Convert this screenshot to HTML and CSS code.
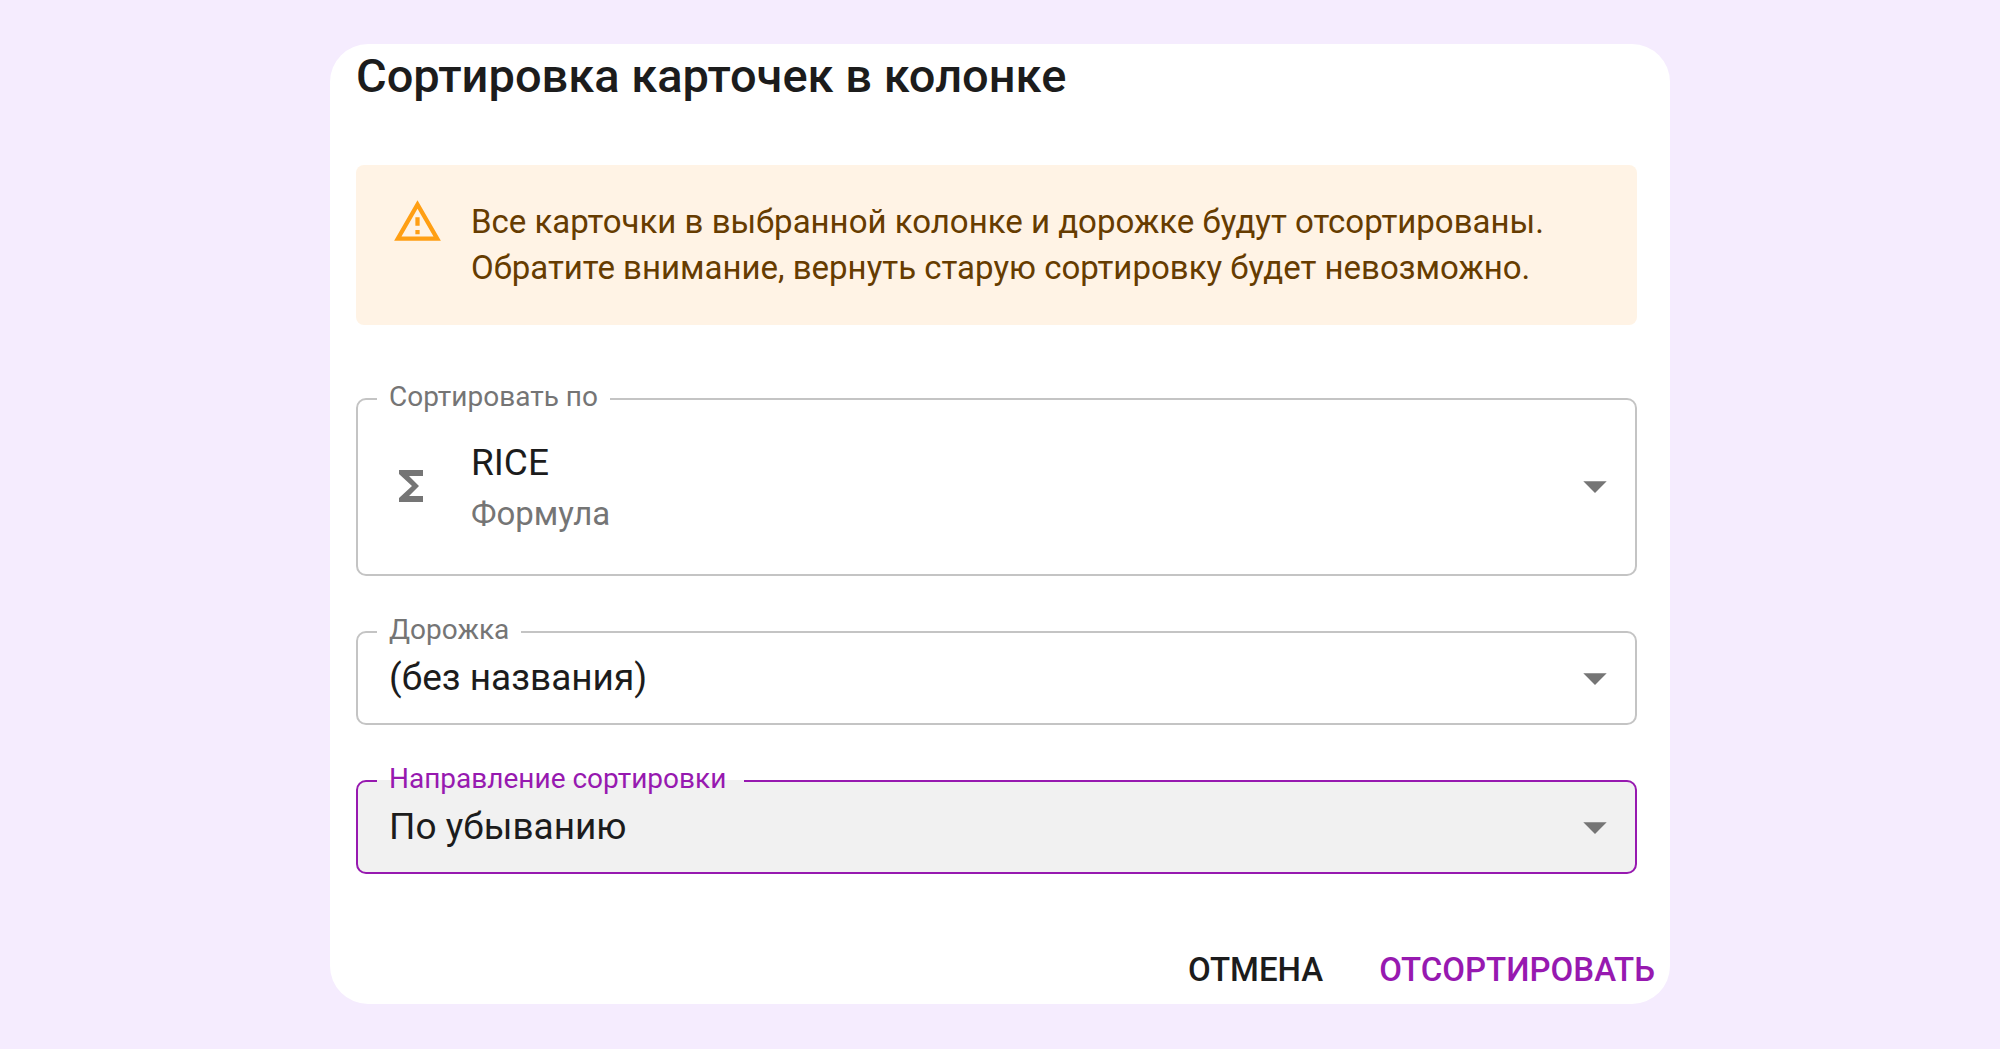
FILE: index.html
```html
<!DOCTYPE html>
<html lang="ru">
<head>
  <meta charset="UTF-8" />
  <meta name="viewport" content="width=device-width, initial-scale=1.0"/>
  <title>Сортировка карточек в колонке</title>
  <link rel="stylesheet" href="styles.css">
</head>
<body>

  <form class="dialog" onsubmit="return false">
    <div class="dialog-content">
      <h1>Сортировка карточек в колонке</h1>

      <div class="alert" role="alert">
        <svg class="alert-icon" viewBox="0 0 24 24"><path d="M12 5.99L19.53 19H4.47L12 5.99M12 2L1 21h22L12 2zm1 14h-2v2h2v-2zm0-6h-2v4h2v-4z"/></svg>
        <p>Все карточки в выбранной колонке и дорожке будут отсортированы.<br>Обратите внимание, вернуть старую сортировку будет невозможно.</p>
      </div>

      <fieldset class="field">
        <legend><label for="sortBy">Сортировать по</label></legend>
        <div class="control control-large">
          <svg class="field-icon" viewBox="0 0 24 24"><path d="M18 4H6v2l6.5 6L6 18v2h12v-3h-7l5-5-5-5h7V4z"/></svg>
          <div class="value">
            <select id="sortBy">
              <option>RICE</option>
            </select>
            <span class="hint">Формула</span>
          </div>
          <svg class="arrow" viewBox="0 0 24 24"><path d="M7 10l5 5 5-5z"/></svg>
        </div>
      </fieldset>

      <fieldset class="field">
        <legend><label for="lane">Дорожка</label></legend>
        <div class="control">
          <select id="lane">
            <option>(без названия)</option>
          </select>
          <svg class="arrow" viewBox="0 0 24 24"><path d="M7 10l5 5 5-5z"/></svg>
        </div>
      </fieldset>

      <fieldset class="field active">
        <legend><label for="direction">Направление сортировки</label></legend>
        <div class="control">
          <select id="direction">
            <option>По убыванию</option>
            <option>По возрастанию</option>
          </select>
          <svg class="arrow" viewBox="0 0 24 24"><path d="M7 10l5 5 5-5z"/></svg>
        </div>
      </fieldset>
    </div>

    <div class="actions">
      <button type="button">ОТМЕНА</button>
      <button type="submit" class="primary">ОТСОРТИРОВАТЬ</button>
    </div>
  </form>

</body>
</html>
```

FILE: styles.css
```css
:root {
  --bg: #f5ecfe;
  --text: #1c1c1c;
  --muted: #757575;
  --border: #c4c4c4;
  --accent: #9719b0;
}

body {
  font-family: Roboto, "Noto Sans", sans-serif;
  background-color: var(--bg);
  color: var(--text);
  margin: 0;
  padding: 44px 0 46px;
}

.dialog {
  width: 67%;
  margin: 0 auto;
  padding-bottom: 6px;
  background-color: #fff;
  border-radius: 38px;
}

.dialog-content {
  padding: 0 33px 0 26px;
}

h1 {
  margin: 0 0 57px;
  font-size: 47px;
  font-weight: 500;
  line-height: 64px;
}

.alert {
  display: flex;
  align-items: flex-start;
  gap: 28px;
  margin-bottom: 56px;
  padding: 31px 36px;
  background-color: #fff3e5;
  border-radius: 8px;
  color: #663c00;
}

.alert p {
  margin: 0;
  padding: 3px 0;
  font-size: 33px;
  line-height: 46px;
}

.alert-icon {
  flex: none;
  width: 51px;
  height: 51px;
  fill: #ff9f14;
}

/* Рамка с подписью в разрыве */
.field {
  min-width: 0;
  margin: 0 0 38px;
  padding: 0 12px 17px 19px;
  border: 2px solid var(--border);
  border-radius: 10px;
}

.field legend {
  padding: 0 12px 4px;
  color: var(--muted);
  font-size: 28px;
  line-height: 32px;
}

.control {
  display: flex;
  align-items: center;
  padding-left: 12px;
}

.control-large {
  padding: 18px 0 20px 10px;
}

.value {
  display: flex;
  flex: 1;
  flex-direction: column;
}

select {
  flex: 1;
  min-width: 0;
  height: 56px;
  padding: 0;
  appearance: none;
  background: transparent;
  border: none;
  outline: none;
  color: var(--text);
  font-family: inherit;
  font-size: 37px;
  line-height: 56px;
  cursor: pointer;
}

.value select {
  flex: none;
}

.hint {
  color: var(--muted);
  font-size: 33px;
  line-height: 46px;
}

.field-icon {
  flex: none;
  width: 48px;
  height: 48px;
  margin-right: 36px;
  fill: var(--muted);
}

.arrow {
  flex: none;
  width: 56px;
  height: 56px;
  fill: var(--muted);
  pointer-events: none;
}

.field.active {
  border-color: var(--accent);
  background-color: #f1f1f1;
}

.field.active legend {
  padding-right: 18px;
  color: var(--accent);
}

.actions {
  display: flex;
  justify-content: flex-end;
  gap: 26px;
  margin-top: 68px;
}

.dialog-content .field:last-child {
  margin-bottom: 0;
}

button {
  padding: 0 15px;
  background: none;
  border: none;
  border-radius: 8px;
  color: var(--text);
  font-family: inherit;
  font-size: 33px;
  font-weight: 500;
  line-height: 56px;
  cursor: pointer;
}

button.primary {
  color: var(--accent);
}
```
